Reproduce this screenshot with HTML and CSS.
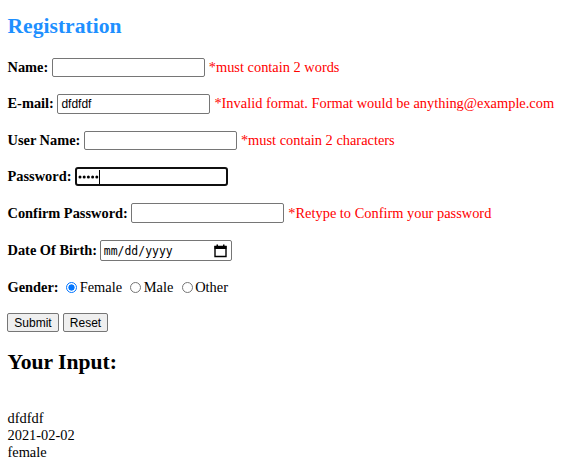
FILE: index.html
```html
<!DOCTYPE html>
<html lang="en">
<head>
<meta charset="utf-8">
<title>Registration</title>
<link rel="stylesheet" href="styles.css">
</head>
<body>
<h2 class="title">Registration</h2>
<form class="form">
<div class="row"><b>Name:</b><input class="field" type="text"><span class="error">*must contain 2 words</span></div>
<div class="row"><b>E-mail:</b><input class="field tall" type="text" value="dfdfdf"><span class="error">*Invalid format. Format would be anything@example.com</span></div>
<div class="row"><b>User Name:</b><input class="field" type="text"><span class="error">*must contain 2 characters</span></div>
<div class="row"><b>Password:</b><div class="field focused"><svg class="dots" viewBox="0 0 21 4"><circle cx="2" cy="2" r="1.5"/><circle cx="6.2" cy="2" r="1.5"/><circle cx="10.4" cy="2" r="1.5"/><circle cx="14.6" cy="2" r="1.5"/><circle cx="18.8" cy="2" r="1.5"/></svg><span class="caret"></span></div></div>
<div class="row"><b>Confirm Password:</b><input class="field tall" type="password"><span class="error">*Retype to Confirm your password</span></div>
<div class="row birth"><b>Date Of Birth:</b><div class="field date"><span>mm/dd/yyyy</span><svg class="calendar" viewBox="0 0 13 14"><path d="M1 2.5h11v10H1z" fill="none" stroke="#000" stroke-width="1.4"/><path d="M.5 2h12v3H.5zM2.5.5h1.5v2H2.5zM9 .5h1.5v2H9z"/></svg></div></div>
<div class="row gender"><b>Gender:</b><span class="radio checked"></span><span class="option">Female</span><span class="radio"></span><span class="option">Male</span><span class="radio"></span><span class="option">Other</span></div>
<div class="actions"><button class="btn submit" type="button">Submit</button><button class="btn reset" type="button">Reset</button></div>
</form>
<h2 class="result-title">Your Input:</h2>
<div class="output">dfdfdf<br>2021-02-02<br>female</div>
</body>
</html>
```
FILE: styles.css
```css
* { box-sizing: border-box; }
body { margin: 0; padding: 13px 0 0 7px; background: #fff; color: #000; font: 14.4px/17px "Liberation Serif", serif; overflow: hidden; }
h2 { margin: 0; padding-left: .5px; font-size: 21.6px; line-height: 26px; }
.title { color: #1e90ff; }
.form { margin: 18px 0 0; }
.row { display: flex; align-items: center; height: 20px; margin-bottom: 16.6px; white-space: nowrap; }
.row b { margin-right: 3.5px; padding-left: .5px; }
.field { width: 153px; height: 19px; padding: 0 3px; border: 1px solid #767676; border-radius: 2px; background: #fff; font: 12px "Liberation Sans", sans-serif; color: #000; }
.tall { height: 20px; }
.error { margin-left: 4px; color: #f00; }
.focused { display: flex; align-items: center; border: 2px solid #101010; border-radius: 3px; padding: 0 1px; }
.dots { width: 21px; height: 4px; }
.caret { width: 1px; height: 14px; background: #000; }
.birth { position: relative; top: .6px; }
.birth b { margin-right: 2.8px; }
.date { display: flex; align-items: center; justify-content: space-between; width: 132px; height: 21px; padding: 0 4px 0 3px; font: 11.45px "DejaVu Sans Mono", monospace; }
.calendar { width: 13px; height: 14px; }
.gender { position: relative; top: .6px; }
.radio { width: 11px; height: 11px; margin: 0 2.5px 0 8.3px; border: 1px solid #767676; border-radius: 50%; }
.checked { margin-left: 4px; border-color: #0075ff; background: radial-gradient(circle, #0075ff 0 2.8px, #fff 3.4px); }
.actions { display: flex; gap: 4px; }
.btn { height: 19px; padding: 0; border: 1px solid #767676; border-radius: 2px; background: #efefef; font: 12px "Liberation Sans", sans-serif; color: #000; }
.submit { width: 52px; }
.reset { width: 45px; }
.result-title { margin-top: 17px; }
.output { margin-top: 35px; padding-left: .5px; }
```
